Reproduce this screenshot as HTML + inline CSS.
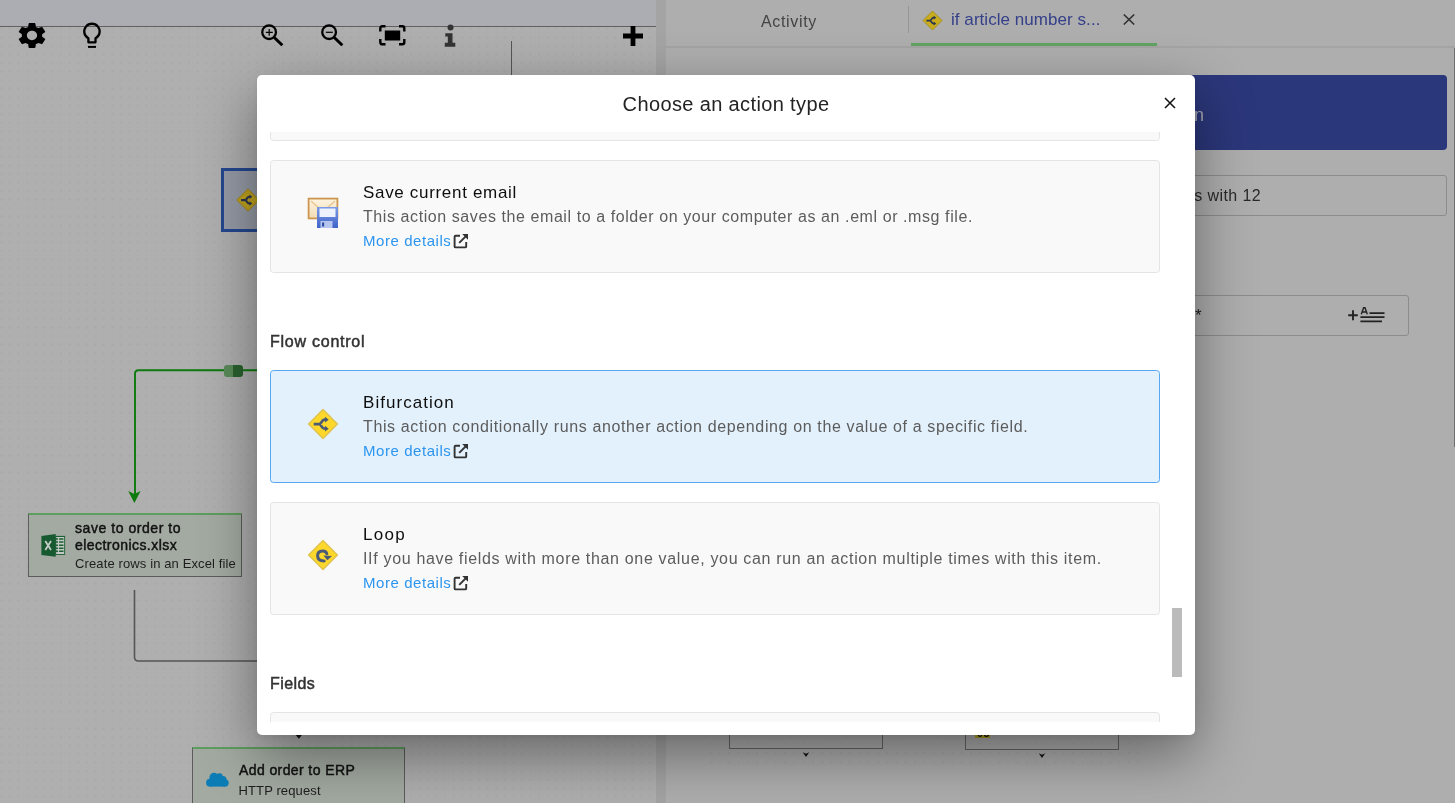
<!DOCTYPE html>
<html><head><meta charset="utf-8">
<style>
*{margin:0;padding:0;box-sizing:border-box}
html,body{width:1455px;height:803px;overflow:hidden;background:#afafaf;font-family:"Liberation Sans",sans-serif}
.a{position:absolute}
#canvas{position:absolute;left:0;top:0;width:656px;height:803px;background-color:#afafaf;
 background-image:radial-gradient(circle at 50% 50%,#a5a5a5 0.6px,rgba(165,165,165,0) 1.1px);background-size:8.536px 8.536px;background-position:22.732px 101.432px}
#topbar{position:absolute;left:0;top:0;width:656px;height:26px;background:rgba(170,172,178,0.86)}
#topline{position:absolute;left:0;top:26px;width:656px;height:1px;background:#606060}
#strip{position:absolute;left:656px;top:0;width:10px;height:803px;background:#a4a4a4}
#panel{position:absolute;left:666px;top:0;width:789px;height:803px;background:#aeaeae;overflow:hidden}
#tabline{position:absolute;left:0;top:46px;width:789px;height:2px;background:#a4a4a4}
#pcanvas{position:absolute;left:40px;top:700px;width:440px;height:66px;
 background-image:radial-gradient(circle at 50% 50%,rgba(0,0,0,0.045) 0.6px,rgba(0,0,0,0) 1.1px);background-size:9.3px 9.3px;background-position:0px 2px}
#modal{position:absolute;left:257px;top:75px;width:938px;height:660px;background:#fff;border-radius:5px;
 box-shadow:0 20px 58px rgba(0,0,0,.42),0 3px 6px rgba(0,0,0,.05);overflow:hidden}
.title{position:absolute;left:0;top:1px;width:938px;height:57px;text-align:center;font-size:20px;color:#232323;line-height:57px;letter-spacing:0.37px}
.close{position:absolute;left:907px;top:22px;width:12px;height:12px}
.scroll{position:absolute;left:0;top:57px;width:938px;height:590px;overflow:hidden}
.card{position:absolute;left:13px;width:890px;height:113px;background:#f9f9f9;border:1px solid #e4e4e4;border-radius:3.5px}
.card.sel{background:#e3f1fc;border-color:#57a7f2}
.card .name{position:absolute;left:92px;top:21.6px;font-size:17px;line-height:20px;color:#0e0e0e;white-space:nowrap}
.card .desc{position:absolute;left:92px;top:45.5px;font-size:16px;line-height:20px;color:#5c5c5c;white-space:nowrap}
.card .more{position:absolute;left:92px;top:70px;font-size:15px;line-height:20px;color:#2b95f0;white-space:nowrap;letter-spacing:0.56px}
.card .ext{position:absolute;left:182px;top:71.8px;width:16px;height:16px}
.card .ico{position:absolute;left:36px;top:36px;width:32px;height:32px}
.sec{position:absolute;left:13px;font-size:16px;line-height:20px;font-weight:normal;-webkit-text-stroke:0.5px #333;color:#333;white-space:nowrap;letter-spacing:0.1px}
.thumb{position:absolute;left:915px;top:533px;width:10px;height:69px;background:#bbb}
.node{position:absolute;background:#a2aaa1;border:1px solid #5c5c5c;border-top:2px solid #5e9e5e}
.nt{position:absolute;font-weight:normal;-webkit-text-stroke:0.45px #111;font-size:14px;line-height:17px;color:#111;white-space:nowrap}
.nd{position:absolute;font-size:13px;line-height:17px;color:#1e1e1e;white-space:nowrap}
</style></head><body><div id="root" style="position:absolute;left:0;top:0;width:1455px;height:803px;will-change:transform">
<div id="canvas"></div>
<div id="topbar"></div>
<div id="topline"></div>
<!-- toolbar icons -->
<svg class="a" style="left:14.8px;top:20px" width="34" height="31" viewBox="0 0 24 24" preserveAspectRatio="none"><path fill="#000" d="M19.14 12.94c.04-.3.06-.61.06-.94 0-.32-.02-.64-.07-.94l2.03-1.58a.49.49 0 0 0 .12-.61l-1.92-3.32a.488.488 0 0 0-.59-.22l-2.39.96c-.5-.38-1.03-.7-1.62-.94l-.36-2.54a.484.484 0 0 0-.48-.41h-3.84c-.24 0-.43.17-.47.41l-.36 2.54c-.59.24-1.13.57-1.62.94l-2.39-.96c-.22-.08-.47 0-.59.22L2.74 8.87c-.12.21-.08.47.12.61l2.03 1.58c-.05.3-.09.63-.09.94s.02.64.07.94l-2.03 1.58a.49.49 0 0 0-.12.61l1.92 3.32c.12.22.37.29.59.22l2.39-.96c.5.38 1.03.7 1.62.94l.36 2.54c.05.24.24.41.48.41h3.84c.24 0 .44-.17.47-.41l.36-2.54c.59-.24 1.13-.56 1.62-.94l2.39.96c.22.08.47 0 .59-.22l1.92-3.32c.12-.22.07-.47-.12-.61l-2.01-1.58zM12 15.6c-1.98 0-3.6-1.62-3.6-3.6s1.62-3.6 3.6-3.6 3.6 1.62 3.6 3.6-1.62 3.6-3.6 3.6z"/></svg>
<svg class="a" style="left:81px;top:22px" width="22" height="27" viewBox="0 0 22 27"><path d="M7.4 16.3A7.7 7.7 0 1 1 14.5 16.3V20.3H7.4Z" fill="none" stroke="#000" stroke-width="2.3" stroke-linejoin="round"/><rect x="7" y="23.9" width="8" height="2" fill="#000"/></svg>
<svg class="a" style="left:256px;top:18px" width="30" height="30" viewBox="0 0 30 30"><circle cx="13.1" cy="14.15" r="6.85" fill="none" stroke="#000" stroke-width="2.3"/><path d="M18 19.2L26.3 27.3" stroke="#000" stroke-width="3"/><path d="M9.8 14.3H16.8M13.2 11V17.7" stroke="#000" stroke-width="1.2"/></svg>
<svg class="a" style="left:316px;top:18px" width="30" height="30" viewBox="0 0 30 30"><circle cx="13.1" cy="14.15" r="6.85" fill="none" stroke="#000" stroke-width="2.3"/><path d="M18 19.2L26.3 27.3" stroke="#000" stroke-width="3"/><path d="M9.8 14.3H16.8" stroke="#000" stroke-width="1.2"/></svg>
<svg class="a" style="left:379px;top:25px" width="27" height="21" viewBox="0 0 27 21"><path d="M1.3 6.5V3.3Q1.3 1.3 3.3 1.3H6.5M20 1.3H23.3Q25.3 1.3 25.3 3.3V6.5M25.3 14V17.3Q25.3 19.3 23.3 19.3H20M6.5 19.3H3.3Q1.3 19.3 1.3 17.3V14" fill="none" stroke="#000" stroke-width="2.4"/><rect x="5.8" y="5.5" width="15.4" height="10" fill="#000"/></svg>
<svg class="a" style="left:443px;top:23px" width="14" height="26" viewBox="0 0 14 26"><circle cx="7.5" cy="4.4" r="3" fill="#333"/><path d="M2.3 10.2H9.5V19.8H12.3V23.8H1.8V19.8H4.8V13.6H2.3Z" fill="#333"/></svg>
<svg class="a" style="left:622.8px;top:25.8px" width="20" height="20" viewBox="0 0 20 20"><path d="M10 0V20M0 10H20" stroke="#000" stroke-width="4.8"/></svg>
<div class="a" style="left:510.8px;top:40.5px;width:1.4px;height:40px;background:#555"></div>
<!-- selected node -->
<div class="a" style="left:221px;top:168px;width:220px;height:64px;border:3px solid #24478f;background:rgba(120,130,155,0.45)"></div>
<svg class="a" style="left:236px;top:188px" width="24" height="24" viewBox="0 0 32 32"><path d="M16 1.5L30.5 16L16 30.5L1.5 16Z" fill="#c2a520" stroke="#a89020" stroke-width="1.5" stroke-linejoin="round"/><path d="M6.7 16.15H12.2C14.2 16.15 14.8 11.65 17.5 11.65H18.8M12.2 16.15C14.2 16.15 14.8 20.65 17.5 20.65H18.8" fill="none" stroke="#2c3650" stroke-width="2.7"/><path d="M18 8.8L21.7 11.65L18 14.5ZM18 17.8L21.7 20.65L18 23.5Z" fill="#2c3650"/></svg>
<!-- green connector -->
<svg class="a" style="left:0;top:0" width="656" height="803"><path d="M257 370.3H138.5Q135 370.3 135 374V497" fill="none" stroke="#0d7a0d" stroke-width="1.9"/><path d="M128.2 491L134.4 503L140.6 491L134.4 494Z" fill="#0d7a0d"/><path d="M134.5 590V657Q134.5 661 138.5 661H257" fill="none" stroke="#555" stroke-width="1.6"/><path d="M295.3 734.5H302.3L298.8 738.8Z" fill="#111"/></svg>
<div class="a" style="left:224px;top:365px;width:19px;height:12px;border-radius:3px;background:#5a8a5a;overflow:hidden"><div class="a" style="left:9px;top:0;width:10px;height:12px;background:#2a612f;border-radius:0 3px 3px 0"></div></div>
<!-- node excel -->
<div class="node" style="left:28px;top:513px;width:214px;height:64px"></div>
<svg class="a" style="left:41px;top:533px" width="25" height="25" viewBox="0 0 25 25"><rect x="14.3" y="2.9" width="9.8" height="19" fill="#1b5e33"/><rect x="15.2" y="4" width="8" height="17" fill="#c4c9c3"/><path d="M14.5 6H22.5M14.5 9.1H22.5M14.5 12.2H22.5M14.5 15.3H22.5M14.5 18.3H22.5" stroke="#1b5e33" stroke-width="1.5"/><path d="M17.5 4.5V20.5" stroke="#c4c9c3" stroke-width="1.1"/><path d="M0.4 3.1L14.7 1V23.7L0.4 21.9Z" fill="#185a30"/><path d="M4.3 8L10 17M10 8L4.3 17" stroke="#c5cbc5" stroke-width="1.8"/></svg>
<div class="nt" style="left:75px;top:519.5px;letter-spacing:0.55px">save to order to</div>
<div class="nt" style="left:75px;top:536.5px;letter-spacing:0.45px">electronics.xlsx</div>
<div class="nd" style="left:75px;top:555.3px;letter-spacing:0.12px">Create rows in an Excel file</div>
<!-- node ERP -->
<div class="node" style="left:192px;top:747px;width:213px;height:70px"></div>
<svg class="a" style="left:206px;top:772px" width="23" height="15" viewBox="0 0 23 15"><g fill="#0d7db7"><circle cx="8" cy="5.4" r="4.6"/><circle cx="13.4" cy="4.6" r="3.4"/><circle cx="16.6" cy="8" r="4"/><circle cx="4" cy="10.7" r="3.9"/><circle cx="19" cy="10.9" r="3.7"/><rect x="4" y="8" width="15" height="6.6"/></g></svg>
<div class="nt" style="left:239px;top:762px;letter-spacing:0.4px">Add order to ERP</div>
<div class="nd" style="left:238.5px;top:782px;letter-spacing:0.12px">HTTP request</div>
<div id="strip"></div>
<div id="panel">
  <div id="tabline"></div>
  <div class="a" style="left:95px;top:12px;font-size:16px;line-height:20px;color:#444;letter-spacing:0.65px">Activity</div>
  <div class="a" style="left:242px;top:6px;width:1px;height:27px;background:#969696"></div>
  <svg class="a" style="left:256px;top:10px" width="21" height="21" viewBox="0 0 32 32"><path d="M16 1.5L30.5 16L16 30.5L1.5 16Z" fill="#c9ab1e" stroke="#a89020" stroke-width="1.5" stroke-linejoin="round"/><path d="M6.7 16.15H12.2C14.2 16.15 14.8 11.65 17.5 11.65H18.8M12.2 16.15C14.2 16.15 14.8 20.65 17.5 20.65H18.8" fill="none" stroke="#2c3650" stroke-width="2.7"/><path d="M18 8.8L21.7 11.65L18 14.5ZM18 17.8L21.7 20.65L18 23.5Z" fill="#2c3650"/></svg>
  <div class="a" style="left:285px;top:9.5px;font-size:17px;line-height:20px;color:#35408a;letter-spacing:0.05px;white-space:nowrap">if article number s...</div>
  <svg class="a" style="left:457px;top:14px" width="12" height="11" viewBox="0 0 12 11"><path d="M0.8 0.5L11.2 10.5M11.2 0.5L0.8 10.5" stroke="#333" stroke-width="1.6"/></svg>
  <div class="a" style="left:245px;top:43px;width:246px;height:2.5px;background:#62a262"></div>
  <div class="a" style="left:300px;top:75px;width:481px;height:75px;background:#2b377b;border-radius:4px"></div>
  <div class="a" style="left:338px;top:102.5px;width:200px;text-align:right;font-size:18px;line-height:24px;color:#a8a8b0;white-space:nowrap">Bifurcation</div>
  <div class="a" style="left:300px;top:175px;width:481px;height:41px;border:1px solid #8c8c8c;border-radius:3px"></div>
  <div class="a" style="left:395px;top:185.5px;width:200px;text-align:right;font-size:16px;line-height:20px;color:#2a2a2a;white-space:nowrap;letter-spacing:0.4px">starts with 12</div>
  <div class="a" style="left:300px;top:295px;width:443px;height:41px;border:1px solid #8c8c8c;border-radius:3px"></div>
  <div class="a" style="left:529px;top:306px;font-size:17px;line-height:20px;color:#222">*</div>
  <svg class="a" style="left:681px;top:306px" width="40" height="18" viewBox="0 0 40 18"><path d="M1.2 9.2H10.8M6 4.2V14.2" stroke="#222" stroke-width="1.9"/><path d="M14.3 8.2L16.6 1.8H18L20.3 8.2M15.3 6H19.3" fill="none" stroke="#222" stroke-width="1.4"/><path d="M22.5 7.2H37.5M13.4 11.1H37.5M13.4 15.3H35" stroke="#222" stroke-width="1.7"/></svg>
  <div id="pcanvas"></div>
  <div class="a" style="left:63px;top:680px;width:154px;height:69px;border:1px solid #666"></div>
  <div class="a" style="left:299px;top:680px;width:154px;height:70px;border:1px solid #666"></div>
  <div class="a" style="left:309px;top:731px;width:15px;height:7px;background:#b0a020"></div><div class="a" style="left:311px;top:727px;font-size:11px;line-height:12px;font-weight:bold;color:#111;letter-spacing:0.5px">03</div>
  <svg class="a" style="left:0;top:0" width="789" height="803"><path d="M136.8 752.3L140 753.8L143.2 752.3L140 757Z M372.8 753.3L376 754.8L379.2 753.3L376 758Z" fill="#111"/></svg>
  <div class="a" style="left:788px;top:48px;width:1px;height:399px;background:#707070"></div>
</div>
<div id="modal">
  <div class="title">Choose an action type</div>
  <svg class="close" viewBox="0 0 12 12"><path d="M1 1L11 11M11 1L1 11" stroke="#111" stroke-width="1.5"/></svg>
  <div class="scroll">
    <div class="card" style="top:-104px"></div>
    <div class="card" style="top:28px">
      <svg class="ico" viewBox="0 0 32 32"><defs><linearGradient id="fl" x1="0" y1="0" x2="0" y2="1"><stop offset="0" stop-color="#7d9be6"/><stop offset="1" stop-color="#3f64c9"/></linearGradient><linearGradient id="en" x1="0" y1="0" x2="0" y2="1"><stop offset="0" stop-color="#fdf4e2"/><stop offset="1" stop-color="#f3dcb4"/></linearGradient></defs><rect x="1.6" y="1.6" width="28.8" height="19.8" fill="url(#en)" stroke="#cd9650" stroke-width="1.8"/><path d="M4 4L13 12M28 4L20 11" fill="none" stroke="#e8c48c" stroke-width="1.4"/><rect x="10" y="10" width="21" height="21" fill="url(#fl)"/><rect x="12.5" y="11.5" width="16" height="8.5" fill="#eef2ff"/><rect x="13.5" y="24" width="12" height="7" fill="#b5c5ee"/><rect x="15" y="25.5" width="2.2" height="4" fill="#2e4fa8"/></svg>
      <div class="name" style="letter-spacing:0.68px">Save current email</div>
      <div class="desc" style="letter-spacing:0.58px">This action saves the email to a folder on your computer as an .eml or .msg file.</div>
      <div class="more">More details</div>
      <svg class="ext" viewBox="0 0 16 16"><path d="M7 2.8H2.6Q1.6 2.8 1.6 3.8V13.4Q1.6 14.4 2.6 14.4H12.2Q13.2 14.4 13.2 13.4V9" fill="none" stroke="#333" stroke-width="1.9"/><path d="M6.2 9.8L13.2 2.8" stroke="#333" stroke-width="1.9"/><path d="M9.2 1H15V6.8Z" fill="#333"/></svg>
    </div>
    <div class="sec" style="top:199.6px;letter-spacing:0.75px">Flow control</div>
    <div class="card sel" style="top:238px">
      <svg class="ico" style="top:36.8px" viewBox="0 0 32 32"><path d="M16 1.6L30.4 16L16 30.4L1.6 16Z" fill="#fdd82a" stroke="#dfc24e" stroke-width="1.4" stroke-linejoin="round"/><path d="M6.7 16.15H12.2C14.2 16.15 14.8 11.65 17.5 11.65H18.8M12.2 16.15C14.2 16.15 14.8 20.65 17.5 20.65H18.8" fill="none" stroke="#4b5a76" stroke-width="2.7"/><path d="M18 8.8L21.7 11.65L18 14.5ZM18 17.8L21.7 20.65L18 23.5Z" fill="#4b5a76"/></svg>
      <div class="name" style="letter-spacing:1.05px">Bifurcation</div>
      <div class="desc" style="letter-spacing:0.63px">This action conditionally runs another action depending on the value of a specific field.</div>
      <div class="more">More details</div>
      <svg class="ext" viewBox="0 0 16 16"><path d="M7 2.8H2.6Q1.6 2.8 1.6 3.8V13.4Q1.6 14.4 2.6 14.4H12.2Q13.2 14.4 13.2 13.4V9" fill="none" stroke="#333" stroke-width="1.9"/><path d="M6.2 9.8L13.2 2.8" stroke="#333" stroke-width="1.9"/><path d="M9.2 1H15V6.8Z" fill="#333"/></svg>
    </div>
    <div class="card" style="top:370px">
      <svg class="ico" viewBox="0 0 32 32"><path d="M16 1.6L30.4 16L16 30.4L1.6 16Z" fill="#fdd82a" stroke="#dfc24e" stroke-width="1.4" stroke-linejoin="round"/><path d="M19.8 14.8Q19.2 12 15.8 12Q10.6 12 10.6 16.8Q10.6 21.9 17.2 22" fill="none" stroke="#4b5a76" stroke-width="3" stroke-linecap="round"/><path d="M16.3 16.5L25 17L20.4 21.3Z" fill="#4b5a76"/></svg>
      <div class="name" style="letter-spacing:1.3px">Loop</div>
      <div class="desc" style="letter-spacing:0.67px">IIf you have fields with more than one value, you can run an action multiple times with this item.</div>
      <div class="more">More details</div>
      <svg class="ext" viewBox="0 0 16 16"><path d="M7 2.8H2.6Q1.6 2.8 1.6 3.8V13.4Q1.6 14.4 2.6 14.4H12.2Q13.2 14.4 13.2 13.4V9" fill="none" stroke="#333" stroke-width="1.9"/><path d="M6.2 9.8L13.2 2.8" stroke="#333" stroke-width="1.9"/><path d="M9.2 1H15V6.8Z" fill="#333"/></svg>
    </div>
    <div class="sec" style="top:541.5px;letter-spacing:0.4px">Fields</div>
    <div class="card" style="top:580px"></div>
  </div>
  <div class="thumb"></div>
</div>
</div></body></html>
